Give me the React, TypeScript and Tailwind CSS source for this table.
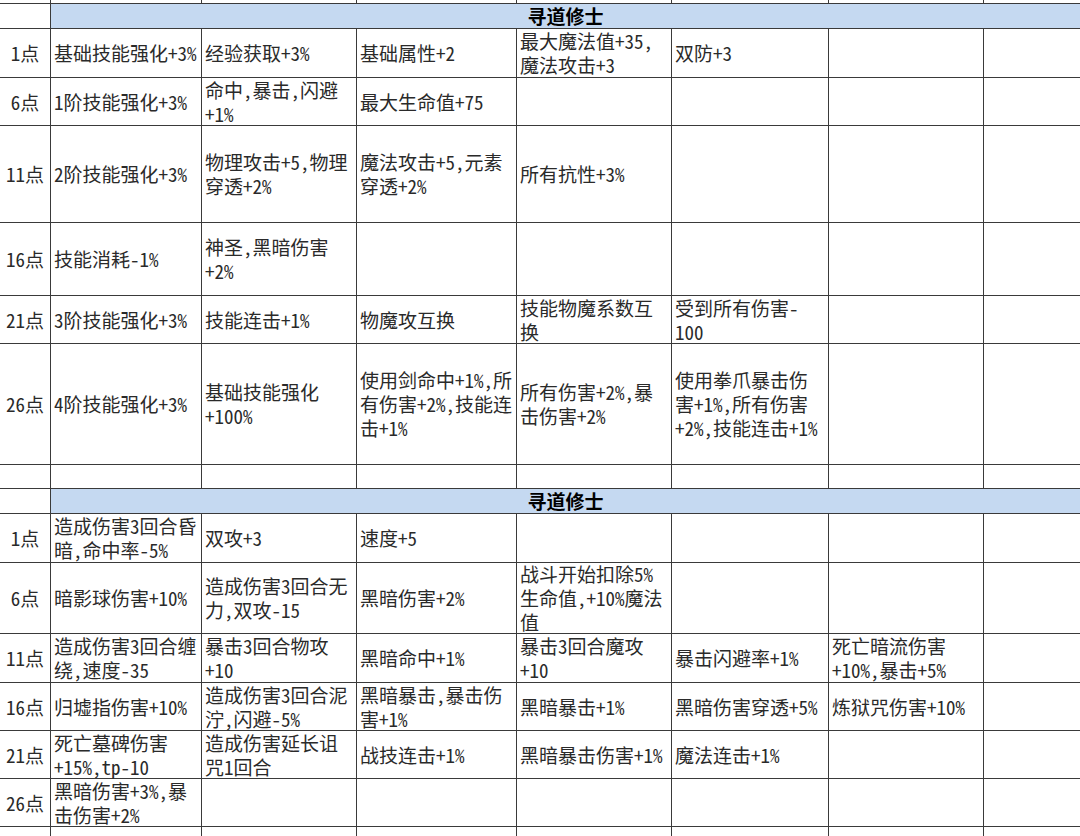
// Spreadsheet view: two "寻道修士" talent blocks, one row per point tier.

const cjk = "font-['Noto_Sans_CJK_SC','Noto_Sans_CJK_JP',sans-serif] [font-feature-settings:'hwid']";

type Line = string[];
type TierRow = { label: string; cells: Line[] };

const sectionA: TierRow[] = [
  {
    label: "1点",
    cells: [["基础技能强化+3%"], ["经验获取+3%"], ["基础属性+2"], ["最大魔法值+35,", "魔法攻击+3"], ["双防+3"]],
  },
  { label: "6点", cells: [["1阶技能强化+3%"], ["命中,暴击,闪避", "+1%"], ["最大生命值+75"]] },
  {
    label: "11点",
    cells: [["2阶技能强化+3%"], ["物理攻击+5,物理", "穿透+2%"], ["魔法攻击+5,元素", "穿透+2%"], ["所有抗性+3%"]],
  },
  { label: "16点", cells: [["技能消耗-1%"], ["神圣,黑暗伤害", "+2%"]] },
  {
    label: "21点",
    cells: [["3阶技能强化+3%"], ["技能连击+1%"], ["物魔攻互换"], ["技能物魔系数互", "换"], ["受到所有伤害-", "100"]],
  },
  {
    label: "26点",
    cells: [
      ["4阶技能强化+3%"],
      ["基础技能强化", "+100%"],
      ["使用剑命中+1%,所", "有伤害+2%,技能连", "击+1%"],
      ["所有伤害+2%,暴", "击伤害+2%"],
      ["使用拳爪暴击伤", "害+1%,所有伤害", "+2%,技能连击+1%"],
    ],
  },
];

const sectionB: TierRow[] = [
  { label: "1点", cells: [["造成伤害3回合昏", "暗,命中率-5%"], ["双攻+3"], ["速度+5"]] },
  {
    label: "6点",
    cells: [["暗影球伤害+10%"], ["造成伤害3回合无", "力,双攻-15"], ["黑暗伤害+2%"], ["战斗开始扣除5%", "生命值,+10%魔法", "值"]],
  },
  {
    label: "11点",
    cells: [
      ["造成伤害3回合缠", "绕,速度-35"],
      ["暴击3回合物攻", "+10"],
      ["黑暗命中+1%"],
      ["暴击3回合魔攻", "+10"],
      ["暴击闪避率+1%"],
      ["死亡暗流伤害", "+10%,暴击+5%"],
    ],
  },
  {
    label: "16点",
    cells: [["归墟指伤害+10%"], ["造成伤害3回合泥", "泞,闪避-5%"], ["黑暗暴击,暴击伤", "害+1%"], ["黑暗暴击+1%"], ["黑暗伤害穿透+5%"], ["炼狱咒伤害+10%"]],
  },
  {
    label: "21点",
    cells: [["死亡墓碑伤害", "+15%,tp-10"], ["造成伤害延长诅", "咒1回合"], ["战技连击+1%"], ["黑暗暴击伤害+1%"], ["魔法连击+1%"]],
  },
  { label: "26点", cells: [["黑暗伤害+3%,暴", "击伤害+2%"]] },
];

function Cell({ lines }: { lines?: Line }) {
  return (
    <div className="flex flex-col justify-center bg-white pl-[3px] whitespace-nowrap leading-[24px]">
      {lines?.map((l, i) => (
        <span key={i}>{l}</span>
      ))}
    </div>
  );
}

function Blank() {
  return <div className="bg-white" />;
}

function Tier({ row }: { row: TierRow }) {
  const cells = Array.from({ length: 7 }, (_, i) => row.cells[i]);
  return (
    <>
      <div className="flex items-center justify-center bg-white leading-[24px]">{row.label}</div>
      {cells.map((c, i) => (
        <Cell key={i} lines={c} />
      ))}
    </>
  );
}

function Header() {
  return (
    <>
      <Blank />
      <div className="col-span-7 flex items-center justify-center bg-[#c5d9f1] font-bold text-black leading-[24px]">
        寻道修士
      </div>
    </>
  );
}

function BlankRow() {
  return (
    <>
      {Array.from({ length: 8 }).map((_, i) => (
        <Blank key={i} />
      ))}
    </>
  );
}

export default function App() {
  return (
    <div className="h-[836px] w-[1080px] overflow-hidden bg-white">
      <div
        className={`grid grid-cols-[50px_150px_154px_159px_154px_156px_154px_96px] grid-rows-[3px_24px_48px_47px_96px_72px_47px_120px_23px_24px_48px_70px_48px_47px_47px_47px_9px] gap-px bg-[#3a3a3a] text-[19px] text-[#2a2a2a] ${cjk}`}
      >
        <BlankRow />
        <Header />
        {sectionA.map((r) => (
          <Tier key={"a" + r.label} row={r} />
        ))}
        <BlankRow />
        <Header />
        {sectionB.map((r) => (
          <Tier key={"b" + r.label} row={r} />
        ))}
        <BlankRow />
      </div>
    </div>
  );
}
